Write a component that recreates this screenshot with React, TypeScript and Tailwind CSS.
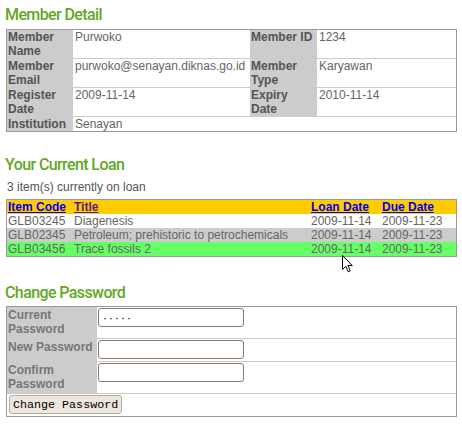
import React from 'react';

const heading =
  "font-['Roboto',sans-serif] font-medium text-[16px] leading-[20px] tracking-[-0.6px] text-[#62a81f] pl-[5px]";

const member = [
  { l1: 'Member Name', v1: 'Purwoko', l2: 'Member ID', v2: '1234' },
  { l1: 'Member Email', v1: 'purwoko@senayan.diknas.go.id', l2: 'Member Type', v2: 'Karyawan' },
  { l1: 'Register Date', v1: '2009-11-14', l2: 'Expiry Date', v2: '2010-11-14' },
];

const loans = [
  { code: 'GLB03245', title: 'Diagenesis', loan: '2009-11-14', due: '2009-11-23', bg: 'bg-white' },
  { code: 'GLB02345', title: 'Petroleum; prehistoric to petrochemicals', loan: '2009-11-14', due: '2009-11-23', bg: 'bg-[#cccccc]' },
  { code: 'GLB03456', title: 'Trace fossils 2', loan: '2009-11-14', due: '2009-11-23', bg: 'bg-[#66ff66]' },
];

function Cursor() {
  return (
    <svg className="absolute left-[341px] top-[254px]" width="13" height="20" viewBox="0 0 13 20">
      <path
        d="M1.5 1.5 L1.5 15.5 L4.8 12.3 L7.2 17.8 L9.3 16.9 L6.9 11.5 L11.3 11.5 Z"
        fill="#fff"
        stroke="#000"
        strokeWidth="1"
        strokeLinejoin="round"
      />
    </svg>
  );
}

export default function App() {
  return (
    <div className="relative w-[462px] h-[432px] bg-white font-['Liberation_Sans',Arial,sans-serif] text-[12px] leading-[14px] text-[#666] pt-[5px] pl-[6px] pr-[5px]">
      <h2 className={`${heading} -ml-[6px] mb-[4px]`}>Member Detail</h2>
      <table className="w-full table-fixed border-separate border-spacing-0 border border-[#999]">
        <colgroup>
          <col className="w-[66px]" />
          <col className="w-[177px]" />
          <col className="w-[67px]" />
          <col />
        </colgroup>
        <tbody>
          {member.map((r) => (
            <tr key={r.l1} className="align-top">
              <td className="bg-[#cccccc] font-bold text-[#555] pl-px border-b border-[#cccccc]">{r.l1}</td>
              <td className="pl-[2px] border-b border-[#cccccc] whitespace-nowrap">{r.v1}</td>
              <td className="bg-[#cccccc] font-bold text-[#555] pl-px border-b border-[#cccccc]">{r.l2}</td>
              <td className="pl-[2px] border-b border-[#cccccc]">{r.v2}</td>
            </tr>
          ))}
          <tr className="align-top">
            <td className="bg-[#cccccc] font-bold text-[#555] pl-px">Institution</td>
            <td colSpan={3} className="pl-[2px]">Senayan</td>
          </tr>
        </tbody>
      </table>

      <h2 className={`${heading} -ml-[6px] mt-[23px]`}>Your Current Loan</h2>
      <p className="mt-[5px] pl-px text-[#555]">3 item(s) currently on loan</p>
      <table className="mt-[5px] w-full table-fixed border-separate border-spacing-0 border border-[#999]">
        <colgroup>
          <col className="w-[66px]" />
          <col />
          <col className="w-[71px]" />
          <col className="w-[75px]" />
        </colgroup>
        <thead>
          <tr className="bg-[#ffcc00] text-left font-bold">
            <th className="pl-px font-bold"><a href="#" className="text-[#0000ee] underline">Item Code</a></th>
            <th className="pl-px font-bold"><a href="#" className="text-[#551a8b] underline">Title</a></th>
            <th className="pl-px font-bold"><a href="#" className="text-[#0000ee] underline">Loan Date</a></th>
            <th className="pl-px font-bold"><a href="#" className="text-[#0000ee] underline">Due Date</a></th>
          </tr>
        </thead>
        <tbody>
          {loans.map((l) => (
            <tr key={l.code} className={l.bg}>
              <td className="pl-px">{l.code}</td>
              <td className="pl-px whitespace-nowrap">{l.title}</td>
              <td className="pl-px">{l.loan}</td>
              <td className="pl-px">{l.due}</td>
            </tr>
          ))}
        </tbody>
      </table>

      <h2 className={`${heading} -ml-[6px] mt-[26px] mb-[3px]`}>Change Password</h2>
      <table className="w-full table-fixed border-separate border-spacing-0 border border-[#999]">
        <colgroup>
          <col className="w-[90px]" />
          <col />
        </colgroup>
        <tbody>
          {['Current Password', 'New Password', 'Confirm Password'].map((label, i) => (
            <tr key={label} className="align-top">
              <td className="bg-[#cccccc] font-bold text-[#777] pl-px pt-px pb-[2px] border-b border-[#cccccc]">{label}</td>
              <td className="pl-px pt-px pb-[2px] border-b border-[#cccccc]">
                <input
                  type="text"
                  readOnly
                  value={i === 0 ? '·····' : ''}
                  className="block w-[146px] h-[19px] rounded-[3px] border border-[#8a7a6a] bg-white px-[4px] text-[12px] leading-[14px] tracking-[2px] text-[#000] outline-none"
                />
              </td>
            </tr>
          ))}
          <tr>
            <td colSpan={2} className="pl-[2px] pt-px pb-[2px]">
              <button className="h-[19px] px-[3px] rounded-[3px] border border-[#b9ab9b] bg-[#ece6dc] font-['Liberation_Mono','Courier_New',monospace] text-[11.7px] leading-[14px] text-black">
                Change Password
              </button>
            </td>
          </tr>
        </tbody>
      </table>
      <Cursor />
    </div>
  );
}
